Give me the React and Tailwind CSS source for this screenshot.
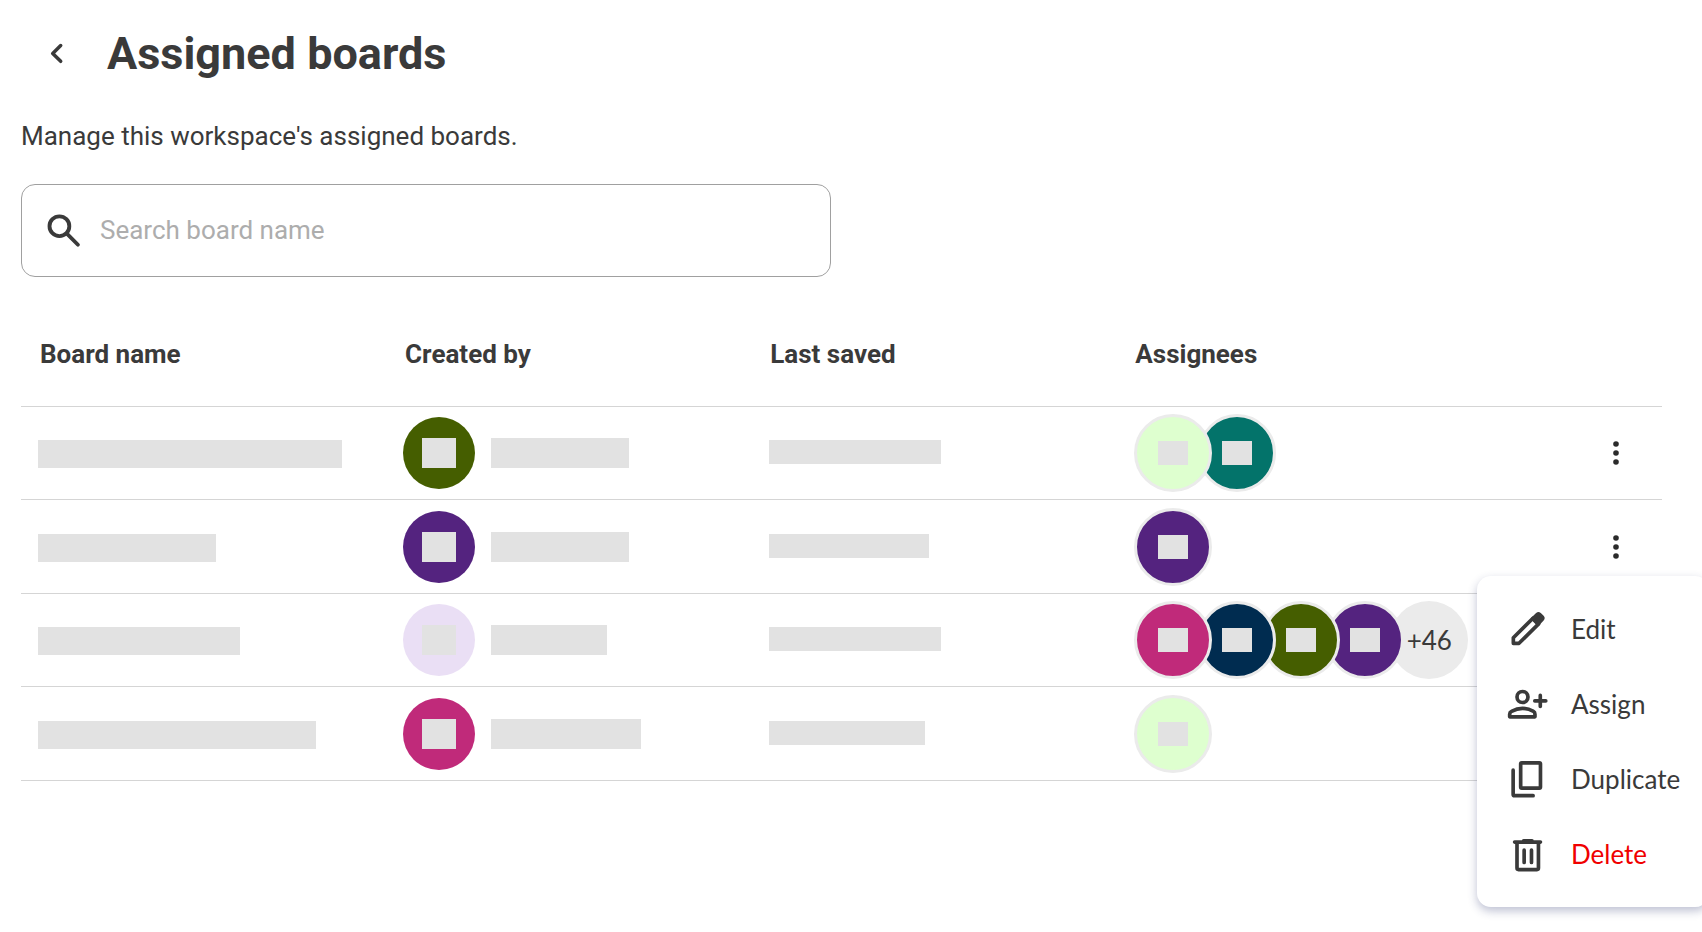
import { useState } from 'react'
import clsx from 'clsx'

const boards = [
  {
    id: 1,
    nameWidth: 'w-[304px]',
    creator: { color: 'bg-[#455e00]', width: 'w-[138px]' },
    savedWidth: 'w-[172px]',
    assignees: ['bg-[#deffcf]', 'bg-[#03736a]']
  },
  {
    id: 2,
    nameWidth: 'w-[178px]',
    creator: { color: 'bg-[#54237f]', width: 'w-[138px]' },
    savedWidth: 'w-[160px]',
    assignees: ['bg-[#54237f]']
  },
  {
    id: 3,
    nameWidth: 'w-[202px]',
    creator: { color: 'bg-[#eadff5]', width: 'w-[116px]' },
    savedWidth: 'w-[172px]',
    assignees: ['bg-[#c02a7a]', 'bg-[#002c50]', 'bg-[#455e00]', 'bg-[#54237f]'],
    more: 46
  },
  {
    id: 4,
    nameWidth: 'w-[278px]',
    creator: { color: 'bg-[#c02a7a]', width: 'w-[150px]' },
    savedWidth: 'w-[156px]',
    assignees: ['bg-[#deffcf]']
  }
]

const columns = ['Board name', 'Created by', 'Last saved', 'Assignees']

const stackOrder = ['z-5', 'z-4', 'z-3', 'z-2']

const Icon = ({ children }) => (
  <svg
    viewBox="0 0 24 24"
    className="size-11 shrink-0"
    fill="none"
    stroke="currentColor"
    strokeWidth="2"
    strokeLinecap="round"
    strokeLinejoin="round"
    aria-hidden="true"
  >
    {children}
  </svg>
)

const SearchIcon = () => (
  <Icon>
    <circle cx="9.5" cy="9.4" r="5.4" strokeWidth="2.1" />
    <path d="M13.7 13.6l5.9 5.9" strokeWidth="2.1" />
  </Icon>
)

const EditIcon = () => (
  <Icon>
    <path d="M4 16.8L14.7 6.1l3.1 3.1L7.1 19.8H4z" />
    <path d="M14.6 6.4l2.5-2.4a.9.9 0 0 1 1.2 0l1.5 1.5a.9.9 0 0 1 0 1.2l-2.4 2.5z" fill="currentColor" />
  </Icon>
)

const AssignIcon = () => (
  <Icon>
    <circle cx="9" cy="8.2" r="3" />
    <path d="M2 19v-1.4c0-.7.4-1.3 1-1.6 1.7-.9 3.800-1.600 6-1.600s4.300.7 6 1.600c.6.300.8.9.8 1.600V19z" />
    <path d="M18.700 7.300v6M15.700 10.300h6" />
  </Icon>
)

const DuplicateIcon = () => (
  <Icon>
    <rect x="8" y="3.200" width="10.800" height="13.800" rx=".6" />
    <path d="M3.900 7.200v13.200c0 .4.300.7.700.7h10.200" />
  </Icon>
)

const DeleteIcon = () => (
  <Icon>
    <path d="M6 6v13.700c0 .4.300.8.800.8h10.100c.4 0 .8-.4.8-.8V6" />
    <path d="M4.700 5.500h14.100M9.600 4.800h4.600" />
    <path d="M9.900 9.900v6.700M13.900 9.900v6.700" />
  </Icon>
)

const menuItems = [
  { label: 'Edit', icon: EditIcon },
  { label: 'Assign', icon: AssignIcon },
  { label: 'Duplicate', icon: DuplicateIcon },
  { label: 'Delete', icon: DeleteIcon, danger: true }
]

const Placeholder = ({ className }) => (
  <span className={clsx('block shrink-0 bg-[#e2e2e2]', className)} />
)

const Avatar = ({ color, ringed, className }) => (
  <span
    className={clsx(
      'flex shrink-0 items-center justify-center rounded-full',
      ringed ? 'relative size-[78px] border-3 border-[#ebebeb]' : 'size-[72px]',
      color,
      className
    )}
  >
    <Placeholder className={ringed ? 'h-6 w-[30px]' : 'h-[30px] w-[34px]'} />
  </span>
)

const BoardMenu = () => (
  <ul
    role="menu"
    className="absolute top-[53px] -right-[69px] z-10 w-[232px] rounded-[14px] bg-white pt-4 pb-[15px] font-[Lato,sans-serif] shadow-[0_4px_10px_rgba(40,50,110,0.3)]"
  >
    {menuItems.map(({ label, icon: ItemIcon, danger }) => (
      <li key={label} role="none">
        <button
          role="menuitem"
          type="button"
          className="flex h-[75px] w-full items-center gap-[21px] pl-[29px] text-left text-[26px]"
        >
          <ItemIcon />
          <span className={danger ? 'text-[#f00000]' : undefined}>{label}</span>
        </button>
      </li>
    ))}
  </ul>
)

const App = () => {
  const [search, setSearch] = useState('')
  const [openMenu, setOpenMenu] = useState(2)

  return (
    <main className="min-h-screen overflow-x-clip bg-white pr-10 pl-[21px] font-[Roboto,sans-serif] text-[#3a3a3a]">
      {/* Header */}
      <header className="flex h-[108px] items-center gap-[26px] pl-3">
        <button type="button" aria-label="Back" className="flex size-12 items-center justify-center">
          <svg
            viewBox="0 0 24 24"
            className="size-6"
            fill="none"
            stroke="currentColor"
            strokeWidth="3.5"
            strokeLinecap="round"
            strokeLinejoin="round"
          >
            <path d="M15.700 3.500L7.700 11.400l8 7.900" />
          </svg>
        </button>
        <h1 className="text-[45px] font-bold">Assigned boards</h1>
      </header>

      <p className="mt-[13px] text-[26px] leading-[30px]">Manage this workspace's assigned boards.</p>

      {/* Search */}
      <label
        htmlFor="board-search"
        className="mt-[33px] flex h-[93px] w-full max-w-[810px] items-center gap-[14px] rounded-[14px] border border-[#a0a0a0] px-5"
      >
        <SearchIcon />
        <input
          id="board-search"
          type="text"
          aria-label="Search board name"
          value={search}
          onChange={(e) => setSearch(e.target.value)}
          placeholder="Search board name"
          className="min-w-0 flex-1 bg-transparent text-[26px] outline-none placeholder:text-[#adadad]"
        />
      </label>

      {/* Boards table */}
      <table className="mt-[25px] w-full table-fixed border-separate border-spacing-0">
        <thead>
          <tr className="h-[105px]">
            {columns.map(column => (
              <th
                key={column}
                scope="col"
                className="w-[22.25%] border-b border-[#d5d5d5] pl-[19px] text-left text-[26px] font-bold"
              >
                {column}
              </th>
            ))}
            <th scope="col" aria-label="Actions" className="border-b border-[#d5d5d5]" />
          </tr>
        </thead>
        <tbody>
          {boards.map(board => (
            <tr key={board.id} className="h-[93px] even:h-[94px]">
              <td className="border-b border-[#d5d5d5] pt-[2px] pl-[17px]">
                <Placeholder className={clsx('h-7', board.nameWidth)} />
              </td>
              <td className="border-b border-[#d5d5d5] pl-[17px]">
                <div className="flex items-center gap-4">
                  <Avatar color={board.creator.color} />
                  <Placeholder className={clsx('h-[30px]', board.creator.width)} />
                </div>
              </td>
              <td className="border-b border-[#d5d5d5] pb-[2px] pl-[18px]">
                <Placeholder className={clsx('h-6', board.savedWidth)} />
              </td>
              <td className="border-b border-[#d5d5d5] pl-[18px]">
                <div className="isolate flex -space-x-[14px]">
                  {board.assignees.map((color, index) => (
                    <Avatar key={index} color={color} ringed className={stackOrder[index]} />
                  ))}
                  {board.more && (
                    <span className="flex size-[78px] shrink-0 items-center justify-center rounded-full bg-[#ebebeb] font-[Lato,sans-serif] text-[26px]">
                      +{board.more}
                    </span>
                  )}
                </div>
              </td>
              <td className="border-b border-[#d5d5d5] pr-[22px]">
                <div className="relative ml-auto size-12">
                  <button
                    type="button"
                    aria-label="Board actions"
                    aria-haspopup="menu"
                    aria-expanded={openMenu === board.id}
                    onClick={() => setOpenMenu(openMenu === board.id ? null : board.id)}
                    className="flex size-12 items-center justify-center text-[#2b2b2b]"
                  >
                    <svg viewBox="0 0 24 24" className="size-6" fill="currentColor">
                      <circle cx="12" cy="3" r="2.800" />
                      <circle cx="12" cy="12" r="2.800" />
                      <circle cx="12" cy="21" r="2.800" />
                    </svg>
                  </button>
                  {openMenu === board.id && <BoardMenu />}
                </div>
              </td>
            </tr>
          ))}
        </tbody>
      </table>
    </main>
  )
}

export default App
